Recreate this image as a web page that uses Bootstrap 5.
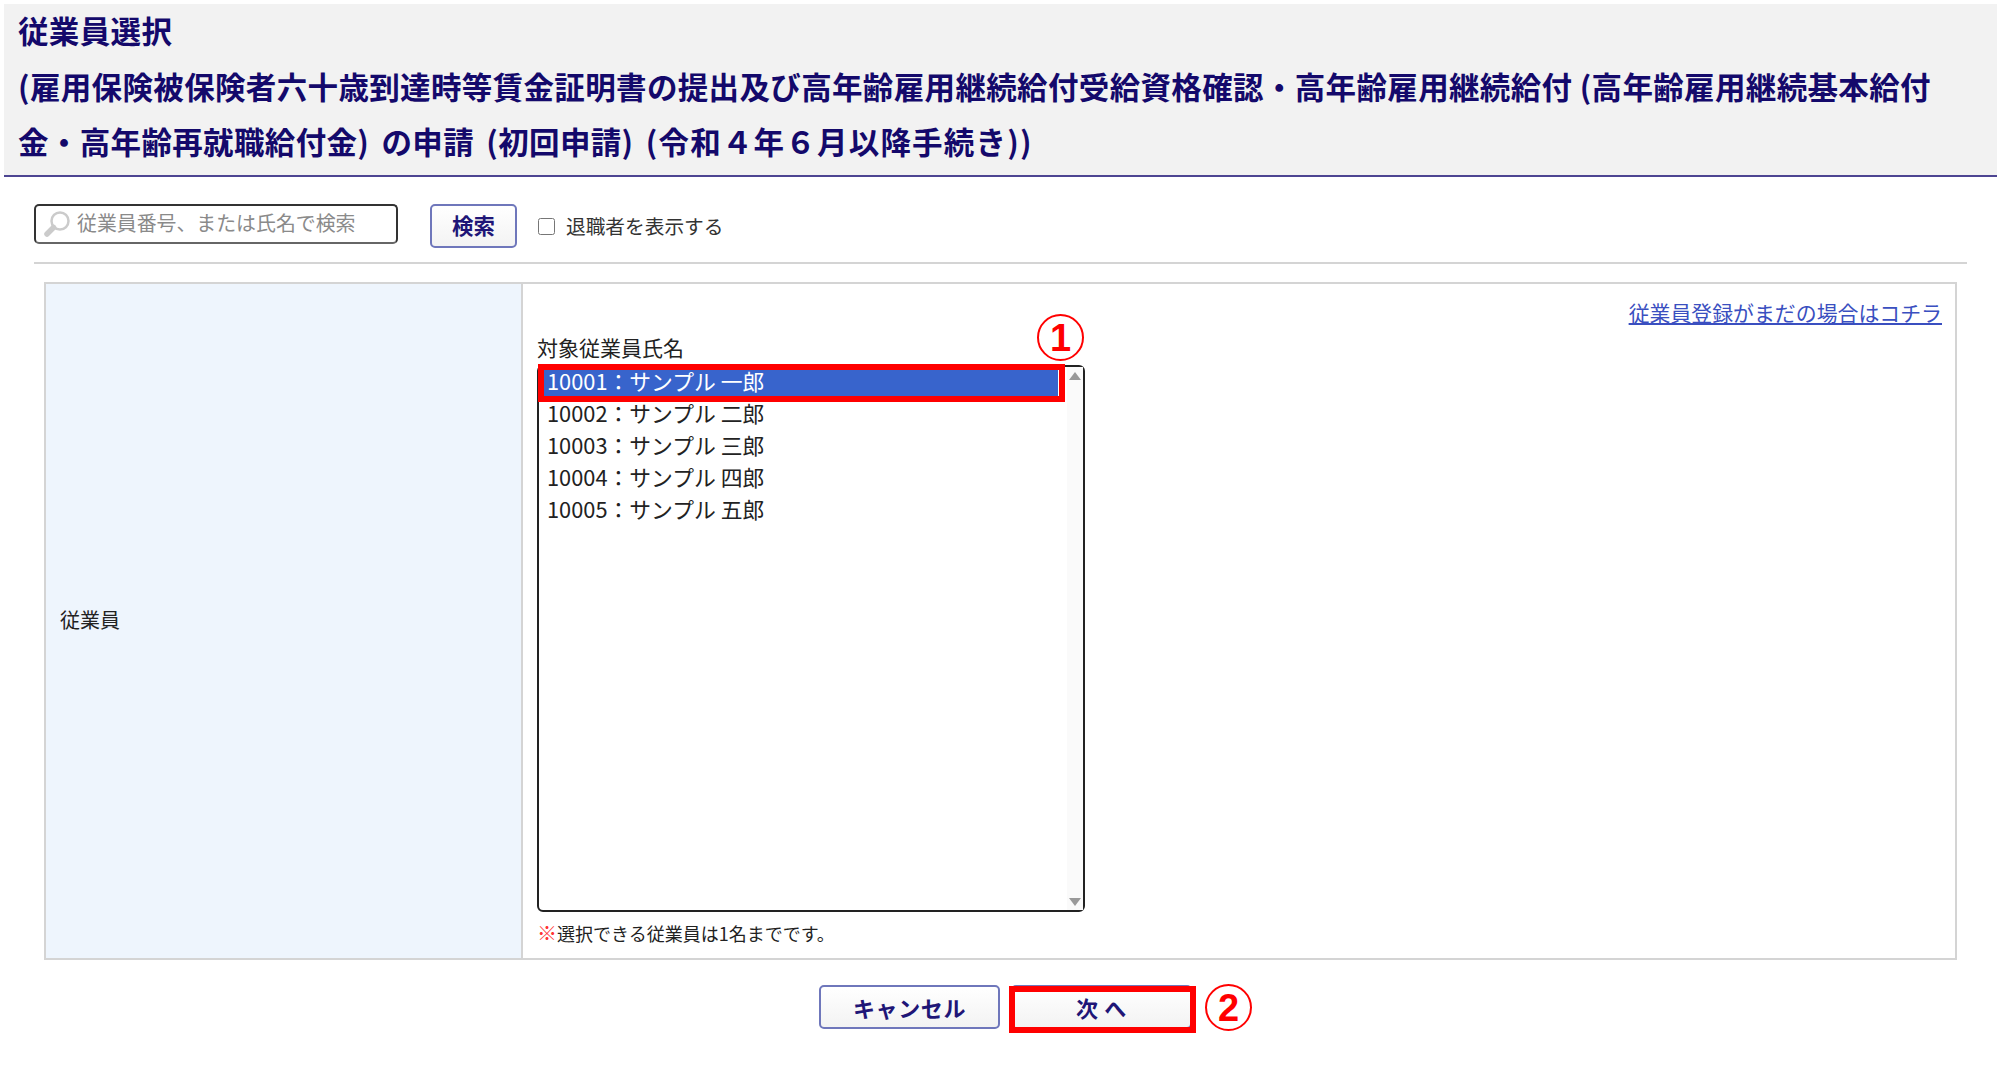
<!DOCTYPE html>
<html lang="ja">
<head>
  <meta charset="UTF-8" />
  <title>従業員選択</title>
  <link href="https://cdn.jsdelivr.net/npm/bootstrap@5.3.3/dist/css/bootstrap.min.css" rel="stylesheet">
  <style>
    html, body { height: 100%; }
    body {
      font-family: "Noto Sans CJK JP", "Liberation Sans", sans-serif;
      font-size: 20px;
      color: #222;
      background: #fff;
      padding: 4px 3px 0 4px;
    }
    .page-head {
      display: flow-root;
      background: #f2f2f2;
      border-bottom: 2px solid #4d4592;
      height: 173px;
      padding: 0 14px;
      color: #14096b;
      font-size: 30.5px;
      font-weight: 700;
      line-height: 55.5px;
      letter-spacing: .35px;
    }
    .page-head h1 { font: inherit; margin: -1px 0 0; }
    .head-last { word-spacing: 5px; }
    .head-tail { letter-spacing: 1.2px; }
    .search-bar { margin: 27px 30px 0; height: 60px; border-bottom: 2px solid #d4d4d4; align-items: flex-start; }
    .search-box {
      width: 364px; height: 40px;
      border: 2px solid #333; border-bottom-color: #666;
      border-radius: 5px;
      padding-left: 7px;
      gap: 6px;
    }
    .search-box input { border: 0; outline: 0; padding: 0 0 2px; width: 300px; font-size: 19.9px; background: transparent; }
    .search-box input::placeholder { color: #8a8a8a; opacity: 1; }
    .soft-btn {
      border: 2px solid #6f77bb;
      border-radius: 5px;
      background: linear-gradient(#fff, #f3f3f3);
      color: #1f1677;
      font-weight: 700;
      padding: 0;
    }
    .btn-search { width: 87px; height: 44px; margin-left: 32px; padding-bottom: 1px; font-size: 21.5px; }
    .retire-check { margin-left: 21px; height: 44px; gap: 11px; font-size: 19.7px; color: #333; }
    .retire-check input { width: 17px; height: 17px; margin: 0; border: 1px solid #777; border-radius: 3px; }
    .form-grid { margin: 18px 40px 0; height: 678px; border: 2px solid #d4d4d4; }
    .label-cell { width: 477px; background: #eef5fd; border-right: 2px solid #d4d4d4; padding: 0 0 3px 14px; }
    .value-cell { padding: 13px 13px 0 14px; }
    .signup-link { color: #3a4fc0; font-size: 20.9px; line-height: 30px; text-align: right; }
    .list-title { font-size: 21px; line-height: 30px; margin-top: 5px; color: #222; }
    .emp-list {
      width: 548px; height: 547px;
      border: 2px solid #222;
      border-radius: 6px;
      padding-left: 4px;
      margin-top: 3px;
      font-size: 21.8px;
    }
    .emp-rows { width: 518px; margin-top: -2px; }
    .emp-row { height: 32px; line-height: 32px; padding-left: 4px; white-space: pre; }
    .emp-row.on { background: #3864cc; color: #fff; }
    .emp-scroll { width: 16px; margin-left: 9px; padding: 5px 0 4px; background: #fafafa; align-items: center; }
    .emp-scroll i { display: block; width: 0; height: 0; border-left: 6px solid transparent; border-right: 6px solid transparent; }
    .emp-scroll .up { border-bottom: 8px solid #999; }
    .emp-scroll .down { border-top: 8px solid #999; }
    .note-line { font-size: 18px; line-height: 26px; margin-top: 8px; }
    .note-line b { color: #f33; font-size: 20px; font-weight: 700; }
    .foot-btns { margin-top: 25px; gap: 11px; padding-left: 10px; }
    .btn-foot { width: 181px; height: 44px; font-size: 22px; letter-spacing: .6px; }
    .red-frame { position: absolute; border: 6px solid #f00; pointer-events: none; }
    .mark-no {
      position: absolute;
      width: 47px; height: 47px;
      border: 2px solid #f00;
      border-radius: 50%;
      color: #f00;
      font-family: "Liberation Sans", sans-serif;
      font-size: 38px;
      font-weight: 700;
      line-height: 1;
    }
    .frame-a { left: 538px; top: 364px; width: 527px; height: 38px; }
    .frame-b { left: 1009px; top: 986px; width: 187px; height: 47px; }
    .no-a { left: 1037px; top: 314px; }
    .no-b { left: 1205px; top: 984px; }
  </style>
</head>
<body class="position-relative">

  <header class="page-head">
    <h1>従業員選択</h1>
    <div>(雇用保険被保険者六十歳到達時等賃金証明書の提出及び高年齢雇用継続給付受給資格確認・高年齢雇用継続給付 (高年齢雇用継続基本給付<br><span class="head-last">金・高年齢再就職給付金) の申請 (初回申請) <span class="head-tail">(令和４年６月以降手続き))</span></span></div>
  </header>

  <div class="search-bar d-flex">
    <div class="search-box d-flex align-items-center">
      <svg width="28" height="28" viewBox="0 0 28 28" fill="none" stroke="#cbcbcb">
        <circle cx="17" cy="11" r="8.5" stroke-width="2.5"/>
        <path d="M10.5 17.5 L4 24" stroke-width="5.5" stroke-linecap="round"/>
      </svg>
      <input type="text" placeholder="従業員番号、または氏名で検索">
    </div>
    <button type="button" class="soft-btn btn-search">検索</button>
    <label class="retire-check d-flex align-items-center">
      <input type="checkbox">
      <span>退職者を表示する</span>
    </label>
  </div>

  <div class="form-grid d-flex">
    <div class="label-cell d-flex align-items-center">従業員</div>
    <div class="value-cell flex-grow-1">
      <div class="signup-link"><a href="#" class="signup-link">従業員登録がまだの場合はコチラ</a></div>
      <div class="list-title">対象従業員氏名</div>
      <div class="emp-list d-flex">
        <div class="emp-rows">
          <div class="emp-row on">10001：サンプル 一郎</div>
          <div class="emp-row">10002：サンプル 二郎</div>
          <div class="emp-row">10003：サンプル 三郎</div>
          <div class="emp-row">10004：サンプル 四郎</div>
          <div class="emp-row">10005：サンプル 五郎</div>
        </div>
        <div class="emp-scroll d-flex flex-column justify-content-between">
          <i class="up"></i>
          <i class="down"></i>
        </div>
      </div>
      <div class="note-line"><b>※</b>選択できる従業員は1名までです。</div>
    </div>
  </div>

  <div class="foot-btns d-flex justify-content-center">
    <button type="button" class="soft-btn btn-foot">キャンセル</button>
    <button type="button" class="soft-btn btn-foot">次 へ</button>
  </div>

  <!-- annotations over the screen -->
  <div class="red-frame frame-a"></div>
  <div class="mark-no no-a d-flex align-items-center justify-content-center">1</div>
  <div class="red-frame frame-b"></div>
  <div class="mark-no no-b d-flex align-items-center justify-content-center">2</div>

  <script src="https://cdn.jsdelivr.net/npm/bootstrap@5.3.3/dist/js/bootstrap.bundle.min.js"></script>
</body>
</html>
